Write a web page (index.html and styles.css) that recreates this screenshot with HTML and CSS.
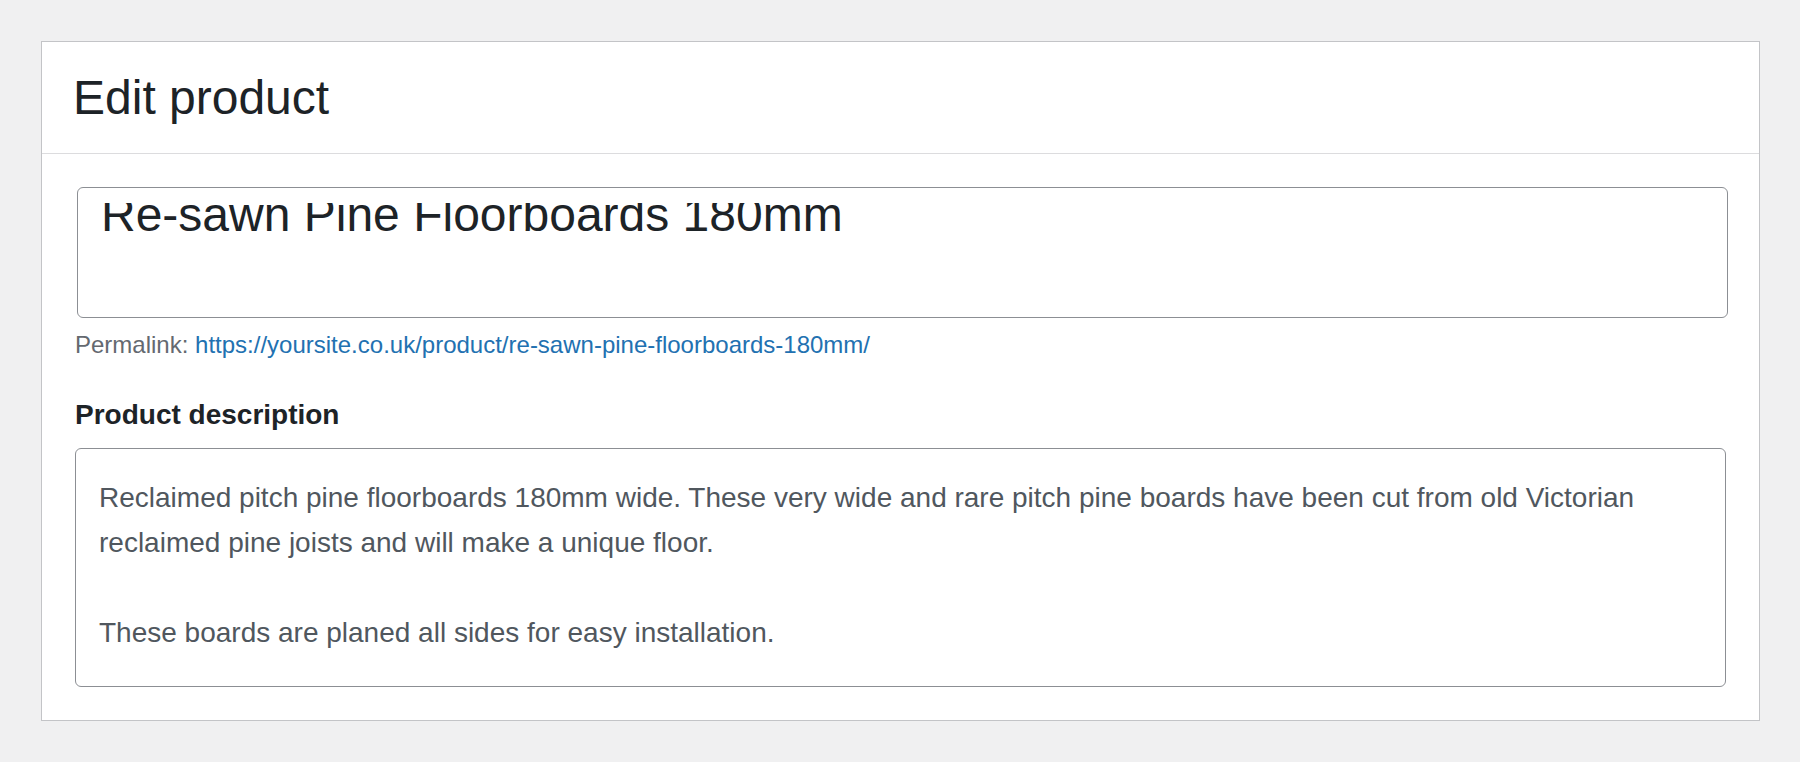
FILE: index.html
```html
<!DOCTYPE html>
<html lang="en">
<head>
<meta charset="utf-8">
<title>Edit product</title>
<link rel="stylesheet" href="styles.css">
</head>
<body>
<div class="panel">
  <div class="panel-header">
    <h1 class="panel-title">Edit product</h1>
  </div>
  <div class="panel-body">
    <div class="title-box">
      <div class="title-clip">
        <div class="title-text">Re-sawn Pine Floorboards 180mm</div>
      </div>
    </div>
    <div class="permalink">Permalink: <a class="permalink-url" href="#">https://yoursite.co.uk/product/re-sawn-pine-floorboards-180mm/</a></div>
    <div class="field-label">Product description</div>
    <div class="desc-box">
      <p class="desc-p">Reclaimed pitch pine floorboards 180mm wide. These very wide and rare pitch pine boards have been cut from old Victorian reclaimed pine joists and will make a unique floor.</p>
      <p class="desc-p">These boards are planed all sides for easy installation.</p>
    </div>
  </div>
</div>
</body>
</html>
```
FILE: styles.css
```css
* { box-sizing: border-box; }
html, body {
  margin: 0;
  padding: 0;
  background: #f0f0f1;
  font-family: "Liberation Sans", Arial, Helvetica, sans-serif;
}
body { padding: 41px 0 0 41px; }
.panel {
  width: 1719px;
  background: #fff;
  border: 1px solid #c3c4c7;
}
.panel-header {
  height: 112px;
  padding: 28px 31px 0 31px;
  border-bottom: 1px solid #dcdcde;
}
.panel-title {
  margin: 0;
  font-size: 48px;
  line-height: 56px;
  font-weight: 400;
  color: #1d2327;
}
.panel-body {
  padding: 33px 33px 33px 33px;
}
.title-box {
  margin-left: 2px;
  margin-right: -2px;
  height: 131px;
  border: 1px solid #8c8f94;
  border-radius: 6px;
  padding: 15px 23px 0 23px;
}
.title-clip {
  overflow: hidden;
  height: 100px;
}
.title-text {
  margin-top: -17px;
  font-size: 48px;
  line-height: 58px;
  color: #1d2327;
  white-space: nowrap;
}
.permalink {
  margin-top: 9px;
  font-size: 24px;
  line-height: 36px;
  color: #646970;
}
.permalink-url {
  color: #2271b1;
  text-decoration: none;
}
.field-label {
  margin-top: 34px;
  font-size: 28px;
  line-height: 36px;
  font-weight: 700;
  color: #1d2327;
}
.desc-box {
  margin-top: 15px;
  border: 1px solid #8c8f94;
  border-radius: 6px;
  padding: 26px 23px 31px 23px;
  font-size: 28px;
  line-height: 45px;
  color: #50575e;
}
.desc-p { margin: 0; }
.desc-p + .desc-p { margin-top: 45px; }
```
